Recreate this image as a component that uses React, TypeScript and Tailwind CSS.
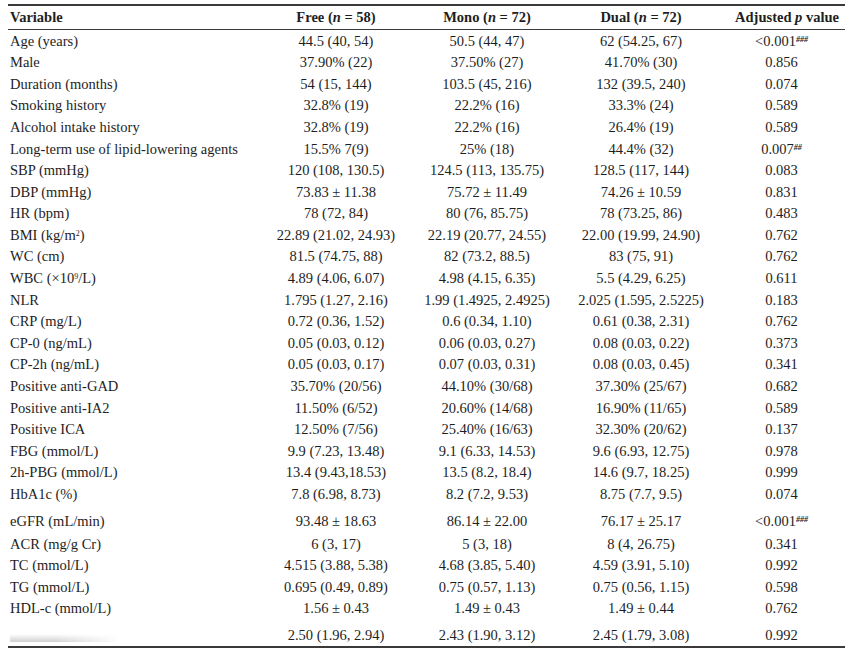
import type { ReactNode } from "react";

type Row = {
  label: ReactNode;
  free: string;
  mono: string;
  dual: string;
  p: ReactNode;
  tall?: boolean;
  last?: boolean;
};

const sup = (s: string) => <sup className="text-[8px] font-bold italic">{s}</sup>;

const rows: Row[] = [
  { label: "Age (years)", free: "44.5 (40, 54)", mono: "50.5 (44, 47)", dual: "62 (54.25, 67)", p: <>&lt;0.001{sup("###")}</> },
  { label: "Male", free: "37.90% (22)", mono: "37.50% (27)", dual: "41.70% (30)", p: "0.856" },
  { label: "Duration (months)", free: "54 (15, 144)", mono: "103.5 (45, 216)", dual: "132 (39.5, 240)", p: "0.074" },
  { label: "Smoking history", free: "32.8% (19)", mono: "22.2% (16)", dual: "33.3% (24)", p: "0.589" },
  { label: "Alcohol intake history", free: "32.8% (19)", mono: "22.2% (16)", dual: "26.4% (19)", p: "0.589" },
  { label: "Long-term use of lipid-lowering agents", free: "15.5% 7(9)", mono: "25% (18)", dual: "44.4% (32)", p: <>0.007{sup("##")}</> },
  { label: "SBP (mmHg)", free: "120 (108, 130.5)", mono: "124.5 (113, 135.75)", dual: "128.5 (117, 144)", p: "0.083" },
  { label: "DBP (mmHg)", free: "73.83 ± 11.38", mono: "75.72 ± 11.49", dual: "74.26 ± 10.59", p: "0.831" },
  { label: "HR (bpm)", free: "78 (72, 84)", mono: "80 (76, 85.75)", dual: "78 (73.25, 86)", p: "0.483" },
  { label: <>BMI (kg/m<sup className="text-[8px]">2</sup>)</>, free: "22.89 (21.02, 24.93)", mono: "22.19 (20.77, 24.55)", dual: "22.00 (19.99, 24.90)", p: "0.762" },
  { label: "WC (cm)", free: "81.5 (74.75, 88)", mono: "82 (73.2, 88.5)", dual: "83 (75, 91)", p: "0.762" },
  { label: <>WBC (×10<sup className="text-[8px]">9</sup>/L)</>, free: "4.89 (4.06, 6.07)", mono: "4.98 (4.15, 6.35)", dual: "5.5 (4.29, 6.25)", p: "0.611" },
  { label: "NLR", free: "1.795 (1.27, 2.16)", mono: "1.99 (1.4925, 2.4925)", dual: "2.025 (1.595, 2.5225)", p: "0.183" },
  { label: "CRP (mg/L)", free: "0.72 (0.36, 1.52)", mono: "0.6 (0.34, 1.10)", dual: "0.61 (0.38, 2.31)", p: "0.762" },
  { label: "CP-0 (ng/mL)", free: "0.05 (0.03, 0.12)", mono: "0.06 (0.03, 0.27)", dual: "0.08 (0.03, 0.22)", p: "0.373" },
  { label: "CP-2h (ng/mL)", free: "0.05 (0.03, 0.17)", mono: "0.07 (0.03, 0.31)", dual: "0.08 (0.03, 0.45)", p: "0.341" },
  { label: "Positive anti-GAD", free: "35.70% (20/56)", mono: "44.10% (30/68)", dual: "37.30% (25/67)", p: "0.682" },
  { label: "Positive anti-IA2", free: "11.50% (6/52)", mono: "20.60% (14/68)", dual: "16.90% (11/65)", p: "0.589" },
  { label: "Positive ICA", free: "12.50% (7/56)", mono: "25.40% (16/63)", dual: "32.30% (20/62)", p: "0.137" },
  { label: "FBG (mmol/L)", free: "9.9 (7.23, 13.48)", mono: "9.1 (6.33, 14.53)", dual: "9.6 (6.93, 12.75)", p: "0.978" },
  { label: "2h-PBG (mmol/L)", free: "13.4 (9.43,18.53)", mono: "13.5 (8.2, 18.4)", dual: "14.6 (9.7, 18.25)", p: "0.999" },
  { label: "HbA1c (%)", free: "7.8 (6.98, 8.73)", mono: "8.2 (7.2, 9.53)", dual: "8.75 (7.7, 9.5)", p: "0.074" },
  { label: "eGFR (mL/min)", free: "93.48 ± 18.63", mono: "86.14 ± 22.00", dual: "76.17 ± 25.17", p: <>&lt;0.001{sup("###")}</>, tall: true },
  { label: "ACR (mg/g Cr)", free: "6 (3, 17)", mono: "5 (3, 18)", dual: "8 (4, 26.75)", p: "0.341" },
  { label: "TC (mmol/L)", free: "4.515 (3.88, 5.38)", mono: "4.68 (3.85, 5.40)", dual: "4.59 (3.91, 5.10)", p: "0.992" },
  { label: "TG (mmol/L)", free: "0.695 (0.49, 0.89)", mono: "0.75 (0.57, 1.13)", dual: "0.75 (0.56, 1.15)", p: "0.598" },
  { label: "HDL-c (mmol/L)", free: "1.56 ± 0.43", mono: "1.49 ± 0.43", dual: "1.49 ± 0.44", p: "0.762" },
  { label: null, free: "2.50 (1.96, 2.94)", mono: "2.43 (1.90, 3.12)", dual: "2.45 (1.79, 3.08)", p: "0.992", last: true },
];

const grid = "grid grid-cols-[254px_148px_154px_154px_127px] items-center";

export default function App() {
  return (
    <div className="h-[654px] w-[851px] bg-white pt-[4px] pl-[8px] font-['Liberation_Serif',serif] text-[14.5px] leading-none text-[#1e1e1e]">
      <div className="w-[837px] border-t-2 border-b-2 border-[#3a3a3a]">
        <div className={`${grid} h-[24px] border-b border-[#3a3a3a] font-bold`}>
          <div className="pl-[2px]">Variable</div>
          <div className="text-center">
            Free (<i>n</i> = 58)
          </div>
          <div className="text-center">
            Mono (<i>n</i> = 72)
          </div>
          <div className="text-center">
            Dual (<i>n</i> = 72)
          </div>
          <div className="pr-[6px] text-right">
            Adjusted <i>p</i> value
          </div>
        </div>

        {rows.map((r, i) => (
          <div
            key={i}
            className={`${grid} ${r.tall ? "h-[28px] pt-[4px]" : r.last ? "h-[27px] pt-[4px]" : "h-[21.6px]"}`}
          >
            <div className="pl-[2px]">
              {r.last ? (
                <div className="mt-[6px] h-[8px] w-[110px] bg-[linear-gradient(180deg,rgba(255,255,255,0)_0%,rgba(170,170,170,0.55)_100%)] [mask-image:linear-gradient(90deg,#000_0%,#000_40%,transparent_100%)]" />
              ) : (
                r.label
              )}
            </div>
            <div className="text-center">{r.free}</div>
            <div className="text-center">{r.mono}</div>
            <div className="text-center">{r.dual}</div>
            <div className="text-center">{r.p}</div>
          </div>
        ))}
      </div>
    </div>
  );
}
